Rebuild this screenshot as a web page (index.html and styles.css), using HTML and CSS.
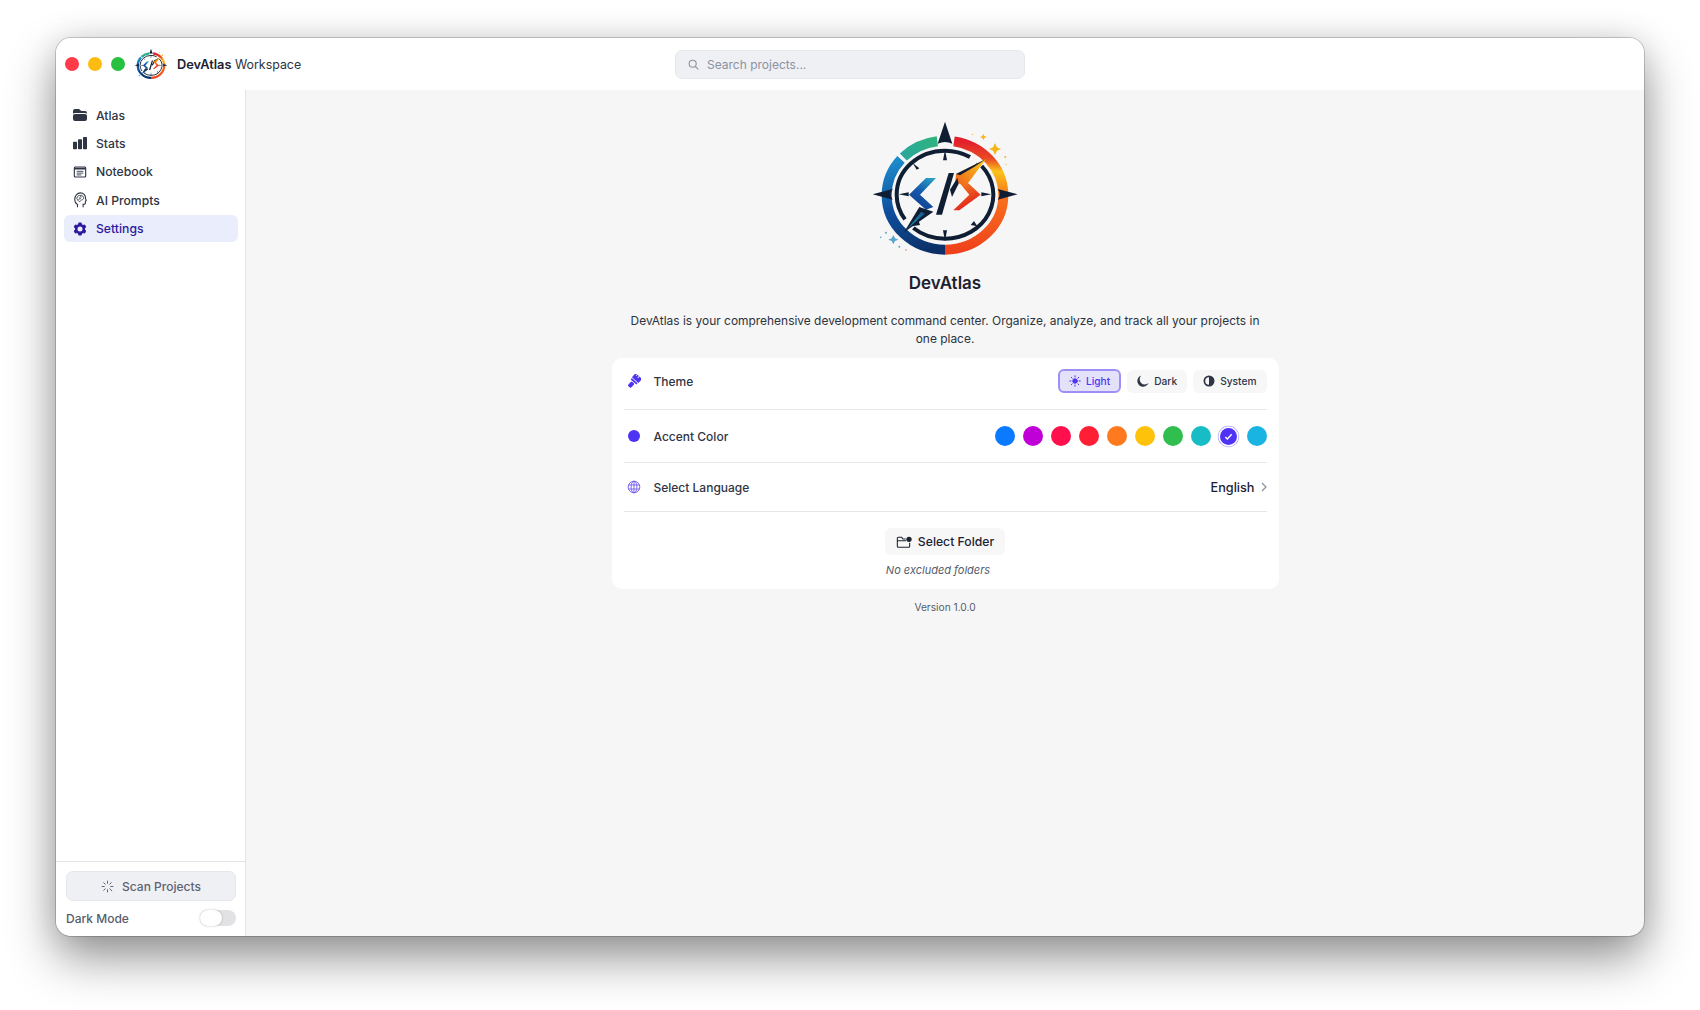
FILE: index.html
```html
<!DOCTYPE html>
<html lang="en">
<head>
    <meta charset="UTF-8">
    <meta name="viewport" content="width=device-width, initial-scale=1.0">
    <title>DevAtlas Workspace</title>
    <link rel="stylesheet" href="styles.css">
</head>
<body>
    <div class="window">
        <header class="titlebar">
            <div class="titlebar-left">
                <div class="traffic-lights">
                    <span class="light light-red"></span>
                    <span class="light light-yellow"></span>
                    <span class="light light-green"></span>
                </div>
                <svg class="logo-small" viewBox="60 25 450 450"><use href="#devatlas-logo"></use></svg>
                <div class="app-title"><strong>DevAtlas</strong> Workspace</div>
            </div>
            <div class="search">
                <svg class="search-icon" viewBox="0 0 24 24"><path d="M21 21l-5.2-5.2M10.5 17a6.5 6.5 0 100-13 6.5 6.5 0 000 13z"/></svg>
                <span>Search projects...</span>
            </div>
            <div></div>
        </header>

        <div class="app-body">
            <aside class="sidebar">
                <nav class="nav">
                    <a class="nav-item">
                        <svg class="nav-icon" viewBox="0 0 24 24" fill="currentColor"><path d="M19.5 21a3 3 0 003-3v-4.5a3 3 0 00-3-3h-15a3 3 0 00-3 3V18a3 3 0 003 3h15zM1.5 10.146V6a3 3 0 013-3h5.379a2.25 2.25 0 011.59.659l2.122 2.121c.14.141.331.22.53.22H19.5a3 3 0 013 3v1.146A4.483 4.483 0 0019.5 9h-15a4.483 4.483 0 00-3 1.146z"/></svg>
                        Atlas
                    </a>
                    <a class="nav-item">
                        <svg class="nav-icon" viewBox="0 0 24 24" fill="currentColor"><rect x="1.500" y="10" width="6" height="11.500" rx="1.200"/><rect x="9" y="6.500" width="6" height="15" rx="1.200"/><rect x="16.500" y="3" width="6" height="18.500" rx="1.200"/></svg>
                        Stats
                    </a>
                    <a class="nav-item">
                        <svg class="nav-icon" viewBox="0 0 24 24" fill="none" stroke="currentColor" stroke-width="1.700"><rect x="3.500" y="4.500" width="17" height="15" rx="1.500"/><path d="M3.500 7h17" stroke-width="2.500"/><path d="M7 11h10M7 13.700h10M7 16.400h7" stroke-width="1.300"/></svg>
                        Notebook
                    </a>
                    <a class="nav-item">
                        <svg class="nav-icon" viewBox="2.500 1 19 22" fill="none" stroke="currentColor" stroke-width="1.500"><path d="M8.500 22v-3.800c-2.300-1.500-3.800-3.800-3.800-6.700C4.700 6.400 8.100 2.200 12.600 2.200c4.100 0 7 3.400 7 7.200 0 1 .2 1.700.8 2.600.4.700 0 1.300-1 1.500v2.500c0 1.300-1 2-3.100 1.800V22"/><path d="M7.800 9.800c0-2.200 1.700-4.100 3.700-4.100s2.500-.4 3.700.4 2.400 2.600 1.500 4.200-1.900 1.100-2.900 2-2.400 2.600-3.400 1.500-2.600-2.400-2.600-4zM10.500 8.500l2.600 2M13 5.800l.3 3M10 12l1.800-2" stroke-width="1.200"/></svg>
                        AI Prompts
                    </a>
                    <a class="nav-item nav-item-active">
                        <svg class="nav-icon" viewBox="0 0 24 24" fill="currentColor"><path fill-rule="evenodd" d="M11.078 2.25c-.917 0-1.699.663-1.85 1.567L9.05 4.889c-.02.12-.115.26-.297.348a7.493 7.493 0 00-.986.57c-.166.115-.334.126-.45.083L6.3 5.508a1.875 1.875 0 00-2.282.819l-.922 1.597a1.875 1.875 0 00.432 2.385l.84.692c.095.078.17.229.154.43a7.598 7.598 0 000 1.139c.015.2-.059.352-.153.43l-.841.692a1.875 1.875 0 00-.432 2.385l.922 1.597a1.875 1.875 0 002.282.818l1.019-.382c.115-.043.283-.031.45.082.312.214.641.405.985.57.182.088.277.228.297.35l.178 1.071c.151.904.933 1.567 1.85 1.567h1.844c.916 0 1.699-.663 1.85-1.567l.178-1.072c.02-.12.114-.26.297-.349.344-.165.673-.356.985-.57.167-.114.335-.125.45-.082l1.02.382a1.875 1.875 0 002.28-.819l.923-1.597a1.875 1.875 0 00-.432-2.385l-.84-.692c-.095-.078-.17-.229-.154-.43a7.614 7.614 0 000-1.139c-.016-.2.059-.352.153-.43l.84-.692c.708-.582.891-1.59.433-2.385l-.922-1.597a1.875 1.875 0 00-2.282-.818l-1.02.382c-.114.043-.282.031-.449-.083a7.49 7.49 0 00-.985-.57c-.183-.087-.277-.227-.297-.348l-.179-1.072a1.875 1.875 0 00-1.85-1.567h-1.843zM12 15.750a3.750 3.750 0 100-7.500 3.750 3.750 0 000 7.500z" clip-rule="evenodd"/></svg>
                        Settings
                    </a>
                </nav>
                <div class="sidebar-footer">
                    <button class="scan-button">
                        <svg class="scan-icon" viewBox="0 0 24 24" fill="none" stroke="currentColor" stroke-width="1.8" stroke-linecap="round"><path d="M12 2v4M12 18v4M2 12h4M18 12h4M5 5l2.800 2.800M16.200 16.200L20 20M5 19l2.800-2.800M16.200 7.800L19 5"/></svg>
                        Scan Projects
                    </button>
                    <div class="dark-mode-row">
                        <span>Dark Mode</span>
                        <span class="toggle"><span class="toggle-knob"></span></span>
                    </div>
                </div>
            </aside>

            <main class="main">
                <svg class="logo-large" viewBox="60 25 450 450">
                    <defs>
                        <linearGradient id="grad-green" gradientUnits="userSpaceOnUse" x1="155" y1="135" x2="260" y2="95">
                            <stop offset="0" stop-color="#2aa79b"/>
                            <stop offset="1" stop-color="#2fb37f"/>
                        </linearGradient>
                        <linearGradient id="grad-blue" gradientUnits="userSpaceOnUse" x1="150" y1="145" x2="260" y2="420">
                            <stop offset="0" stop-color="#1d8ccb"/>
                            <stop offset="0.45" stop-color="#0f4f9e"/>
                            <stop offset="1" stop-color="#0b2f66"/>
                        </linearGradient>
                        <linearGradient id="grad-hot" gradientUnits="userSpaceOnUse" x1="320" y1="95" x2="300" y2="425">
                            <stop offset="0" stop-color="#e2202c"/>
                            <stop offset="0.14" stop-color="#ea4a24"/>
                            <stop offset="0.25" stop-color="#fbc31a"/>
                            <stop offset="0.48" stop-color="#f7711c"/>
                            <stop offset="1" stop-color="#f0401b"/>
                        </linearGradient>
                        <linearGradient id="grad-left" gradientUnits="userSpaceOnUse" x1="250" y1="205" x2="200" y2="300">
                            <stop offset="0" stop-color="#2aa3c4"/>
                            <stop offset="0.5" stop-color="#1559ad"/>
                            <stop offset="1" stop-color="#0f3f8c"/>
                        </linearGradient>
                        <linearGradient id="grad-right" gradientUnits="userSpaceOnUse" x1="320" y1="205" x2="370" y2="300">
                            <stop offset="0" stop-color="#f7941d"/>
                            <stop offset="1" stop-color="#e0141f"/>
                        </linearGradient>
                        <linearGradient id="grad-bolt-top" gradientUnits="userSpaceOnUse" x1="400" y1="155" x2="330" y2="225">
                            <stop offset="0" stop-color="#fbc31a"/>
                            <stop offset="1" stop-color="#ee6a1c"/>
                        </linearGradient>
                        <linearGradient id="grad-bolt-bottom" gradientUnits="userSpaceOnUse" x1="175" y1="360" x2="235" y2="300">
                            <stop offset="0" stop-color="#1e93b8"/>
                            <stop offset="1" stop-color="#0f4f8c"/>
                        </linearGradient>
                        <g id="devatlas-logo">
                            <g fill="none" stroke-width="30">
                                <path d="M160 142A175 163.500 0 0 1 262 94.500" stroke="url(#grad-green)"/>
                                <path d="M285 420A175 163.500 0 0 1 110 256.500A175 163.500 0 0 1 153 149" stroke="url(#grad-blue)"/>
                                <path d="M285 420A175 163.500 0 0 0 460 256.500A175 163.500 0 0 0 312 95" stroke="url(#grad-hot)"/>
                            </g>
                            <g fill="none" stroke="#101e33" stroke-width="12">
                                <path d="M395 169A145 132 0 0 1 285 387A145 132 0 0 1 190 355"/>
                                <path d="M165 329A145 132 0 0 1 140 255A145 132 0 0 1 285 123A145 132 0 0 1 360 142"/>
                            </g>
                            <g fill="#101e33">
                                <path d="M285 36L307 102Q285 92 263 102Z"/>
                                <path d="M68 254L128 238Q116 254 128 270Z"/>
                                <path d="M503 254L443 238Q455 254 443 270Z"/>
                                <path d="M285 120L291 152H279Z"/>
                                <path d="M285 395L291 362H279Z"/>
                                <path d="M146 254L176 248V260Z"/>
                                <path d="M424 254L394 248V260Z"/>
                                <path d="M188 160L208 176L200 180Z"/>
                                <path d="M382 350L362 346L372 334Z"/>
                                <path d="M186 350L206 334L210 346Z"/>
                                <path d="M382 158L364 178L372 182Z"/>
                            </g>
                            <path d="M258 205H228L177 255L228 300L250 292L210 255Z" fill="url(#grad-left)"/>
                            <path d="M296 190H312L276 315H258Z" fill="#101e33"/>
                            <path d="M316 205L345 212L392 255L328 302H310L358 255Z" fill="url(#grad-right)"/>
                            <path d="M408 148L318 193L316 218L348 228Z" fill="url(#grad-bolt-top)"/>
                            <path d="M408 148L318 193L330 197L372 172Z" fill="#101e33"/>
                            <path d="M300 240L322 205L326 222L306 262Z" fill="#101e33"/>
                            <path d="M162 368L208 292L250 306Z" fill="#101e33"/>
                            <path d="M172 358L214 306L224 312Z" fill="url(#grad-bolt-bottom)"/>
                            <g fill="#f7b718">
                                <path d="M435 100L441 113L453 118L441 123L435 136L429 123L417 118L429 113Z"/>
                                <path d="M400 72L403 79L410 82L403 85L400 92L397 85L390 82L397 79Z"/>
                                <circle cx="368" cy="74" r="2"/>
                                <circle cx="466" cy="142" r="3"/>
                                <circle cx="468" cy="164" r="2"/>
                            </g>
                            <g fill="#5aa7c9">
                                <path d="M130 376L135 386L145 390L135 394L130 404L125 394L115 390L125 386Z"/>
                                <circle cx="108" cy="369" r="3"/>
                                <circle cx="92" cy="383" r="2.500"/>
                                <circle cx="148" cy="411" r="3"/>
                            </g>
                            <circle cx="168" cy="421" r="2" fill="#e0683a"/>
                        </g>
                    </defs>
                    <use href="#devatlas-logo"></use>
                </svg>
                <h1 class="about-title">DevAtlas</h1>
                <p class="about-text">DevAtlas is your comprehensive development command center. Organize, analyze, and track all your projects in one place.</p>

                <section class="card">
                    <div class="row row-theme">
                        <div class="row-label">
                            <svg class="row-icon" viewBox="0 0 24 24" fill="#4f33f5"><g transform="rotate(42 12 12)"><path d="M5 0h3v3h1.500V0h3v4h1.500V0H19a1 1 0 011 1v8.500H5z"/><rect x="6" y="10.800" width="13" height="3" rx=".5"/><rect x="9" y="15" width="7" height="10" rx="2"/></g></svg>
                            Theme
                        </div>
                        <div class="theme-buttons">
                            <button class="theme-button theme-button-active">
                                <svg class="theme-icon" viewBox="0 0 24 24" fill="currentColor" stroke="currentColor" stroke-width="2" stroke-linecap="round"><circle cx="12" cy="12" r="4.500"/><path d="M12 1.500v2.500M12 20v2.500M1.500 12H4M20 12h2.500M4.600 4.600l1.700 1.700M17.700 17.700l1.700 1.700M4.600 19.400l1.700-1.700M17.700 6.300l1.700-1.700"/></svg>
                                Light
                            </button>
                            <button class="theme-button">
                                <svg class="theme-icon" viewBox="0 0 24 24" fill="currentColor"><path d="M23 16A11.500 11.500 0 118.500 1a10 10 0 0014.500 15z"/></svg>
                                Dark
                            </button>
                            <button class="theme-button">
                                <svg class="theme-icon" viewBox="0 0 24 24"><path d="M12 1a11 11 0 100 22 11 11 0 000-22zm0 3.500v15a7.500 7.500 0 010-15z" fill="currentColor" fill-rule="evenodd"/></svg>
                                System
                            </button>
                        </div>
                    </div>
                    <div class="row row-accent">
                        <div class="row-label">
                            <span class="accent-dot"></span>
                            Accent Color
                        </div>
                        <div class="swatches">
                            <span class="swatch swatch-blue"></span>
                            <span class="swatch swatch-purple"></span>
                            <span class="swatch swatch-pink"></span>
                            <span class="swatch swatch-red"></span>
                            <span class="swatch swatch-orange"></span>
                            <span class="swatch swatch-yellow"></span>
                            <span class="swatch swatch-green"></span>
                            <span class="swatch swatch-teal"></span>
                            <span class="swatch swatch-indigo swatch-selected">
                                <svg class="swatch-check" viewBox="0 0 24 24"><path d="M5 13l4.500 4.500L19 7"/></svg>
                            </span>
                            <span class="swatch swatch-cyan"></span>
                        </div>
                    </div>
                    <div class="row row-language">
                        <div class="row-label">
                            <svg class="row-icon row-icon-globe" viewBox="0 0 24 24" fill="none" stroke="#7a64f0" stroke-width="1.700"><circle cx="12" cy="12" r="10"/><ellipse cx="12" cy="12" rx="5" ry="10"/><path d="M12 2v20M2.500 8.500h19M2.500 15.500h19"/></svg>
                            Select Language
                        </div>
                        <div class="language-value">
                            English
                            <svg class="chevron" viewBox="6 2 12 20"><path d="M8 4l8 8-8 8"/></svg>
                        </div>
                    </div>
                    <div class="folder-section">
                        <button class="folder-button">
                            <svg class="folder-icon" viewBox="0 0 24 24" fill="none" stroke="currentColor" stroke-width="1.600"><path d="M20.500 13v5.500a1.500 1.500 0 01-1.500 1.500H3.500A1.500 1.500 0 012 18.500v-12A1.500 1.500 0 013.500 5h5l2 2.500h4M2 10h13"/><circle cx="19.500" cy="8" r="4" fill="currentColor" stroke="none"/></svg>
                            Select Folder
                        </button>
                        <div class="no-folders">No excluded folders</div>
                    </div>
                </section>
                <div class="version">Version 1.0.0</div>
            </main>
        </div>
    </div>
</body>
</html>
```

FILE: styles.css
```css
* {
    box-sizing: border-box;
}

body {
    margin: 0;
    padding: 38px 56px;
    height: 1010px;
    overflow: hidden;
    background-color: white;
    font-family: Inter, "Noto Sans", sans-serif;
    color: #2d3340;
}

button {
    font-family: inherit;
    cursor: pointer;
}

.window {
    display: flex;
    flex-direction: column;
    height: 898px;
    border-radius: 15px;
    overflow: hidden;
    background-color: #f6f6f6;
    box-shadow: 0 0 0 1px rgba(0,0,0,0.18), 0 22px 48px rgba(0,0,0,0.42), 0 0 30px rgba(0,0,0,0.1);
}

/* title bar */
.titlebar {
    display: grid;
    grid-template-columns: 1fr 350px 1fr;
    align-items: center;
    height: 52px;
    background-color: white;
    flex-shrink: 0;
}

.titlebar-left {
    display: flex;
    align-items: center;
    padding-left: 9px;
}

.traffic-lights {
    display: flex;
    gap: 9px;
}

.light {
    width: 14px;
    height: 14px;
    border-radius: 50%;
}

.light-red {
    background-color: #ff3b47;
}

.light-yellow {
    background-color: #febc11;
}

.light-green {
    background-color: #28c03f;
}

.logo-small {
    width: 34px;
    height: 34px;
    margin-left: 9px;
    margin-top: 2px;
}

.app-title {
    margin-left: 9px;
    font-size: 12.4px;
    color: #2d3340;
}

.app-title strong {
    font-size: 12.8px;
    font-weight: 600;
    color: #1c2230;
}

.search {
    display: flex;
    align-items: center;
    height: 29px;
    padding-left: 11px;
    gap: 7px;
    background-color: #eff0f4;
    border: 1px solid #e6e7ec;
    border-radius: 7px;
    font-size: 12px;
    color: #8c91a0;
}

.search-icon {
    width: 13px;
    height: 13px;
    fill: none;
    stroke: #8c91a0;
    stroke-width: 2;
}

/* sidebar */
.app-body {
    display: flex;
    flex: 1;
    min-height: 0;
}

.sidebar {
    display: flex;
    flex-direction: column;
    justify-content: space-between;
    width: 190px;
    background-color: white;
    border-right: 1px solid #e4e4e6;
    flex-shrink: 0;
}

.nav {
    display: flex;
    flex-direction: column;
    gap: 1.4px;
    padding: 11.5px 7px 0 8px;
}

.nav-item {
    display: flex;
    align-items: center;
    gap: 8px;
    height: 27px;
    padding-left: 8px;
    border-radius: 6px;
    font-size: 12.2px;
    font-weight: 500;
    color: #2f3545;
}

.nav-item-active {
    background-color: #e9edfc;
    color: #2e1a9e;
}

.nav-icon {
    width: 16px;
    height: 16px;
    flex-shrink: 0;
}

.sidebar-footer {
    padding: 9px 9px 0 10px;
    height: 75px;
    border-top: 1px solid #e4e4e6;
}

.scan-button {
    display: flex;
    align-items: center;
    justify-content: center;
    gap: 8px;
    width: 100%;
    height: 30px;
    padding-bottom: 1px;
    background-color: #eff0f4;
    border: 1px solid #e6e7ec;
    border-radius: 7px;
    font-size: 12px;
    font-weight: 500;
    color: #5d6373;
}

.scan-icon {
    width: 13px;
    height: 13px;
}

.dark-mode-row {
    display: flex;
    justify-content: space-between;
    align-items: center;
    margin-top: 9px;
    font-size: 12px;
    font-weight: 500;
    color: #565c6c;
}

.toggle {
    display: block;
    width: 36px;
    height: 16px;
    padding: 0;
    background-color: #e2e2e4;
    border-radius: 8px;
}

.toggle-knob {
    display: block;
    width: 22px;
    height: 16px;
    background-color: white;
    border-radius: 8px;
    box-shadow: 0 0 2px rgba(0,0,0,0.3);
}

/* main */
.main {
    display: flex;
    flex-direction: column;
    align-items: center;
    flex: 1;
    padding-top: 28px;
}

.logo-large {
    width: 150px;
    height: 150px;
}

.about-title {
    margin: 4px 0 0;
    font-size: 17px;
    line-height: 22px;
    font-weight: 600;
    color: #1c2230;
}

.about-text {
    width: 650px;
    margin: 18px 0 0;
    font-size: 11.95px;
    line-height: 18px;
    text-align: center;
    color: #2d3340;
}

.card {
    width: 667px;
    margin-top: 10px;
    padding: 0 12px;
    background-color: white;
    border-radius: 10px;
}

.row {
    display: flex;
    justify-content: space-between;
    align-items: center;
    border-bottom: 1px solid #e6e6e8;
    padding-left: 3px;
}

.row-theme {
    height: 52px;
    padding-bottom: 5px;
}

.row-accent {
    height: 53px;
}

.row-language {
    height: 49px;
}

.row-label {
    display: flex;
    align-items: center;
    gap: 13px;
    font-size: 12px;
    font-weight: 500;
    color: #2f3545;
}

.row-icon {
    width: 14px;
    height: 14px;
}

.theme-buttons {
    display: flex;
    align-items: center;
    gap: 6px;
}

.theme-button {
    display: flex;
    align-items: center;
    gap: 5px;
    height: 23px;
    padding: 0 10px;
    background-color: #f7f7f8;
    border: none;
    border-radius: 6px;
    font-size: 10.2px;
    font-weight: 500;
    color: #2f3545;
}

.theme-button-active {
    height: 24px;
    padding: 0 9px;
    background-color: #e4e2fb;
    border: 2px solid #9c8ff6;
    color: #4f33f5;
}

.theme-icon {
    width: 12px;
    height: 12px;
}

.accent-dot {
    display: block;
    width: 12px;
    height: 12px;
    margin: 0 1px;
    border-radius: 50%;
    background-color: #4f33f5;
}

.swatches {
    display: flex;
    gap: 8px;
}

.swatch {
    display: flex;
    align-items: center;
    justify-content: center;
    width: 20px;
    height: 20px;
    border-radius: 50%;
}

.swatch-blue { background-color: #0a7aff; }
.swatch-purple { background-color: #bf00d6; }
.swatch-pink { background-color: #ff0f4b; }
.swatch-red { background-color: #ff1f35; }
.swatch-orange { background-color: #ff7a1f; }
.swatch-yellow { background-color: #ffc20a; }
.swatch-green { background-color: #30bf4f; }
.swatch-teal { background-color: #17bcc4; }
.swatch-indigo { background-color: #4f33f5; }
.swatch-cyan { background-color: #19b4e2; }

.swatch-selected {
    width: 17px;
    height: 17px;
    margin: 1.5px;
    box-shadow: 0 0 0 1.5px white, 0 0 0 2.2px #b5aaf8;
}

.swatch-check {
    width: 11px;
    height: 11px;
    fill: none;
    stroke: white;
    stroke-width: 3;
}

.language-value {
    display: flex;
    align-items: center;
    gap: 6px;
    font-size: 12.7px;
    font-weight: 500;
    color: #1c2230;
}

.chevron {
    width: 6px;
    height: 10px;
    fill: none;
    stroke: #8c91a0;
    stroke-width: 2.5;
}

.folder-section {
    display: flex;
    flex-direction: column;
    align-items: center;
    height: 77px;
    padding-top: 16px;
}

.folder-button {
    display: flex;
    align-items: center;
    gap: 6px;
    height: 27px;
    padding: 0 10.5px;
    background-color: #f7f7f8;
    border: none;
    border-radius: 6px;
    font-size: 12.2px;
    font-weight: 500;
    color: #1c2230;
}

.folder-icon {
    width: 16px;
    height: 16px;
}

.no-folders {
    margin-top: 8px;
    margin-right: 14px;
    font-size: 11px;
    line-height: 14px;
    font-style: italic;
    color: #565c6c;
}

.version {
    margin-top: 11px;
    font-size: 10.2px;
    line-height: 14px;
    color: #565c6c;
}
```
